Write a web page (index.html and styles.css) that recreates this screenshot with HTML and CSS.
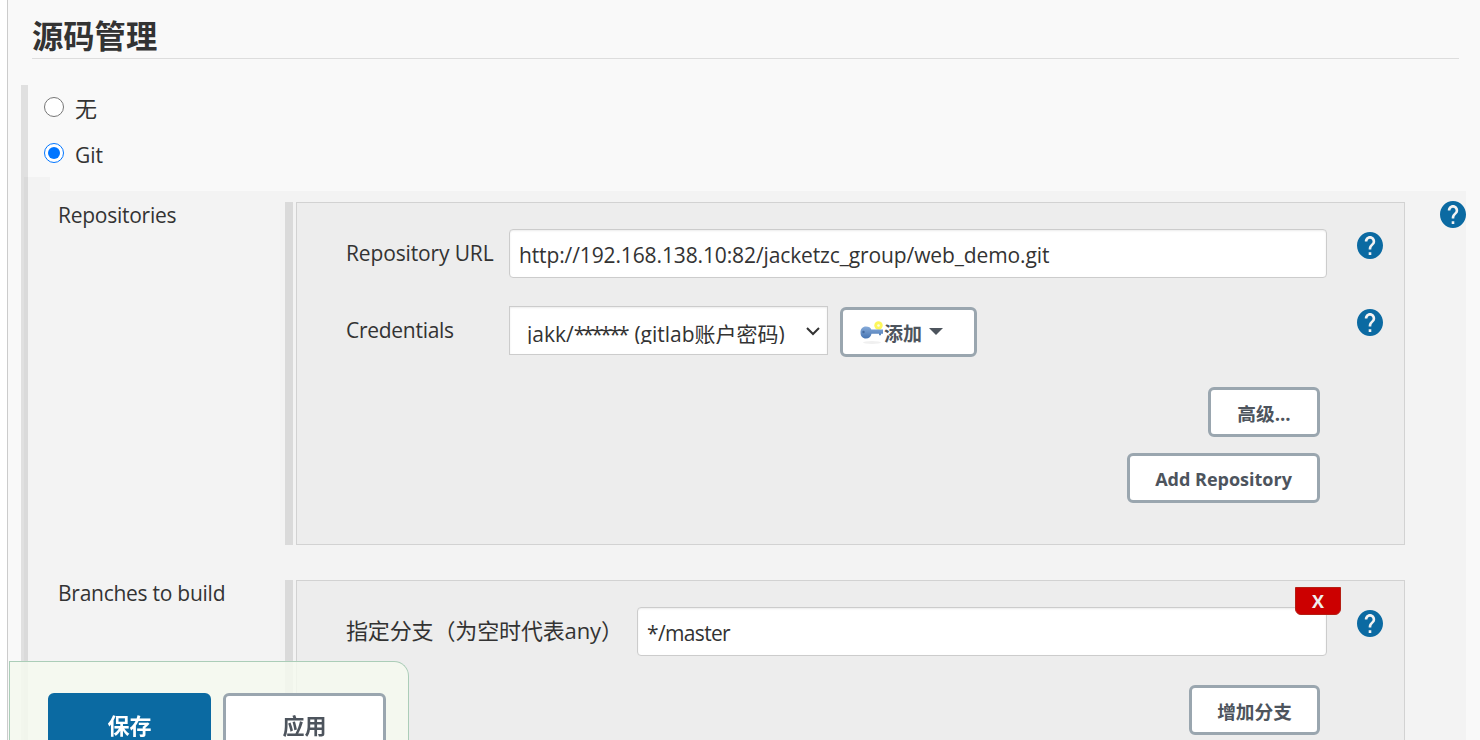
FILE: index.html
```html
<!DOCTYPE html>
<html lang="zh-CN">
<head>
    <meta charset="UTF-8">
    <meta name="viewport" content="width=device-width, initial-scale=1.0">
    <title>源码管理</title>
    <link rel="stylesheet" href="styles.css">
</head>
<body>
<svg class="defs" width="0" height="0">
    <symbol id="help" viewBox="2 2 20 20" preserveAspectRatio="none">
        <path fill="#f3f3f3" d="M7 4h10v16H7z"/>
        <path fill="#0b6aa2" d="M12 2C6.48 2 2 6.48 2 12s4.48 10 10 10 10-4.48 10-10S17.52 2 12 2zm1 17h-2v-2h2v2zm2.07-7.75l-.9.92C13.45 12.9 13 13.5 13 15h-2v-.5c0-1.1.45-2.1 1.17-2.83l1.24-1.26c.37-.36.59-.86.59-1.41 0-1.1-.9-2-2-2s-2 .9-2 2H8c0-2.21 1.79-4 4-4s4 1.79 4 4c0 .88-.36 1.68-.93 2.25z"/>
    </symbol>
</svg>
<form class="config">
    <h2 class="section-header">源码管理</h2>

    <div class="radio-list">
        <label class="radio-row"><input type="radio" name="scm"><span class="cjk-label">无</span></label>
        <label class="radio-row"><input type="radio" name="scm" checked><span>Git</span></label>
    </div>

    <div class="git-settings">
        <div class="git-inner">
            <div class="setting">
                <div class="setting-name">Repositories</div>
                <div class="panel panel-repo">
                    <div class="field">
                        <span class="field-name">Repository URL</span>
                        <input class="text-input" type="text" value="http://192.168.138.10:82/jacketzc_group/web_demo.git">
                        <svg class="help"><use href="#help"/></svg>
                    </div>
                    <div class="field field-credentials">
                        <span class="field-name field-name-tight">Credentials</span>
                        <div class="select">
                            <span class="select-value">jakk/<span class="mask">******</span> (gitlab账户密码)</span>
                            <svg class="chevron" viewBox="0 0 14 9"><path d="M1 1l6 6 6-6" fill="none" stroke="#333" stroke-width="2"/></svg>
                        </div>
                        <button class="btn btn-add" type="button">
                            <svg class="key" viewBox="0 0 24 24">
                                <defs>
                                    <linearGradient id="keyBlue" x1="0" y1="0" x2="0" y2="1">
                                        <stop offset="0" stop-color="#86abd9"/>
                                        <stop offset="1" stop-color="#4674b2"/>
                                    </linearGradient>
                                </defs>
                                <ellipse cx="12" cy="21.500" rx="9" ry="1.500" fill="#f0f0f0"/>
                                <circle cx="18.500" cy="4.500" r="4.200" fill="#fdf75a"/>
                                <circle cx="18.500" cy="4.500" r="1.300" fill="#fffde0"/>
                                <path d="M6 5.500c3 0 4.600 1.300 5.300 3H23v4.200h-2v1.500h-2v-1.500h-7.500C11 15.800 9 17.500 6 17.500c-3.500 0-5.500-2.500-5.500-6s2-6 5.500-6z" fill="url(#keyBlue)"/>
                                <circle cx="3.500" cy="11" r="1.200" fill="#456a9f"/>
                            </svg>
                            <span>添加</span>
                            <span class="caret"></span>
                        </button>
                        <svg class="help"><use href="#help"/></svg>
                    </div>
                    <div class="actions">
                        <button class="btn btn-advanced" type="button">高级...</button>
                        <button class="btn btn-repo" type="button">Add Repository</button>
                    </div>
                </div>
                <svg class="help"><use href="#help"/></svg>
            </div>

            <div class="setting">
                <div class="setting-name">Branches to build</div>
                <div class="panel panel-branch">
                    <button class="delete" type="button">X</button>
                    <div class="field">
                        <span class="field-name field-name-wide">指定分支（为空时代表any）</span>
                        <input class="text-input branch-input" type="text" value="*/master">
                        <svg class="help"><use href="#help"/></svg>
                    </div>
                    <div class="actions">
                        <button class="btn btn-branch" type="button">增加分支</button>
                    </div>
                </div>
            </div>
        </div>
    </div>

    <div class="save-bar">
        <button class="save-btn primary" type="button">保存</button>
        <button class="save-btn" type="button">应用</button>
    </div>
</form>
</body>
</html>
```

FILE: styles.css
```css
* {
    box-sizing: border-box;
}

body {
    margin: 0;
    height: 740px;
    overflow: hidden;
    background-color: #fff;
    color: #333;
    font-family: "Open Sans", "Noto Sans CJK SC", sans-serif;
    font-size: 21px;
}

input,
button {
    font-family: inherit;
}

.defs {
    display: block;
}

.config {
    height: 740px;
    overflow: hidden;
    margin-left: 7px;
    border-left: 1px solid #ccc;
    background-color: #f9f9f9;
}

.section-header {
    height: 59px;
    margin: 0 21px 26px 24px;
    padding-top: 13px;
    border-bottom: 1px solid #ddd;
    font-size: 31.300px;
    line-height: 46px;
}

.radio-list {
    height: 92px;
    margin-left: 13px;
    padding-left: 16px;
    border-left: 7px solid #e0e0e0;
}

.radio-row {
    display: flex;
    height: 46px;
    line-height: 48px;
}

.radio-row input {
    width: 20px;
    height: 20px;
    margin: 12px 11px 0 0;
}

.cjk-label {
    font-size: 22px;
    line-height: 46px;
}

.git-settings {
    width: 1445px;
    margin-left: 13px;
    border-left: 3px solid #e0e0e0;
}

/* the top 14px only tints the indent column */
.git-inner {
    height: 563px;
    padding-top: 25px;
    border-left: 4px solid #dadada;
    background: linear-gradient(#f9f9f9, #f9f9f9) 22px 0 / 100% 14px no-repeat #f3f3f3;
}

.setting {
    display: flex;
    padding-left: 30px;
    margin-bottom: 35px;
}

.setting > .help {
    margin: -1px 0 0 34.500px;
}

.setting-name {
    width: 227px;
    line-height: 26px;
    letter-spacing: -0.260px;
}

.panel {
    position: relative;
    width: 1109px;
    margin-left: 11px;
    padding: 26px 21px 0 49px;
    border: 1px solid #d2d2d2;
    background-color: #ededed;
    box-shadow: -3px 0 0 #f3f3f3, -11px 0 0 #dadada;
}

.panel-repo {
    height: 343px;
}

.panel-branch {
    height: 220px;
}

.field {
    display: flex;
    height: 49px;
}

.field .help {
    margin: 3px 0 0 auto;
}

.field-credentials {
    margin-top: 28px;
}

.field-name {
    width: 163px;
    line-height: 48px;
    letter-spacing: -0.140px;
    white-space: nowrap;
}

.field-name-tight {
    letter-spacing: -0.280px;
}

.field-name-wide {
    width: 291px;
    font-size: 22px;
    line-height: 46px;
}

.text-input {
    flex: 1;
    margin-right: 30px;
    padding: 2px 9px 0;
    border: 1px solid #ccc;
    border-radius: 4px;
    box-shadow: inset 0 1px 2px rgba(0, 0, 0, 0.08);
    background-color: #fff;
    color: #333;
    font-size: 21px;
    letter-spacing: -0.120px;
}

.branch-input {
    letter-spacing: -0.650px;
}

.help {
    flex: none;
    width: 26px;
    height: 27px;
}

.select {
    display: flex;
    justify-content: space-between;
    width: 319px;
    height: 49px;
    margin-right: 12px;
    padding: 13px 7px 0 17px;
    border: 1px solid #ccc;
    box-shadow: inset 0 1px 2px rgba(0, 0, 0, 0.08);
    background-color: #fff;
}

.select-value {
    height: 24px;
    overflow: hidden;
    line-height: 28px;
    white-space: nowrap;
}

.mask {
    letter-spacing: -2.700px;
    margin-right: 2px;
}

.chevron {
    width: 14px;
    height: 9px;
    margin-top: 7px;
}

.btn {
    height: 50px;
    padding: 2px 0 0;
    border: 3px solid #9aa6af;
    border-radius: 6px;
    background-color: #fff;
    color: #4d545d;
    font-size: 18px;
    font-weight: bold;
}

.btn-add {
    display: flex;
    align-items: center;
    width: 137px;
    margin-top: 1px;
    padding-left: 17px;
    font-size: 19px;
}

.key {
    width: 24px;
    height: 24px;
}

.caret {
    margin: -3px 0 0 7px;
    border: 7px solid transparent;
    border-top-color: #4d545d;
    border-bottom: 0;
}

.actions {
    display: flex;
    flex-direction: column;
    align-items: flex-end;
    gap: 16px;
    padding-right: 63px;
    margin-top: 32px;
}

.panel-branch .actions {
    margin-top: 29px;
}

.btn-advanced {
    width: 112px;
    padding: 0;
    font-size: 18.700px;
}

.btn-repo {
    width: 193px;
}

.btn-branch {
    width: 131px;
    padding: 0;
    font-size: 18.700px;
}

.delete {
    position: absolute;
    top: 6px;
    right: 63px;
    width: 46px;
    height: 28px;
    padding: 0;
    border: 1px solid #b51f14;
    border-radius: 0 0 6px 6px;
    background-color: #c00;
    color: #eee;
    font-size: 18px;
    font-weight: bold;
}

.save-bar {
    position: fixed;
    left: 9px;
    bottom: 0;
    display: flex;
    gap: 12px;
    width: 400px;
    height: 79px;
    padding: 31px 0 0 38px;
    border: 1px solid #abcdb8;
    border-bottom: 0;
    border-radius: 0 15px 0 0;
    background-color: rgba(245, 249, 239, 0.85);
    overflow: hidden;
}

.save-btn {
    flex: none;
    width: 163px;
    height: 61px;
    padding: 0;
    border: 3px solid #9aa6af;
    border-radius: 6px;
    background-color: #fff;
    color: #4d545d;
    font-size: 22px;
    font-weight: bold;
}

.save-btn.primary {
    border-color: #0b6aa2;
    background-color: #0b6aa2;
    color: #fff;
}
```
